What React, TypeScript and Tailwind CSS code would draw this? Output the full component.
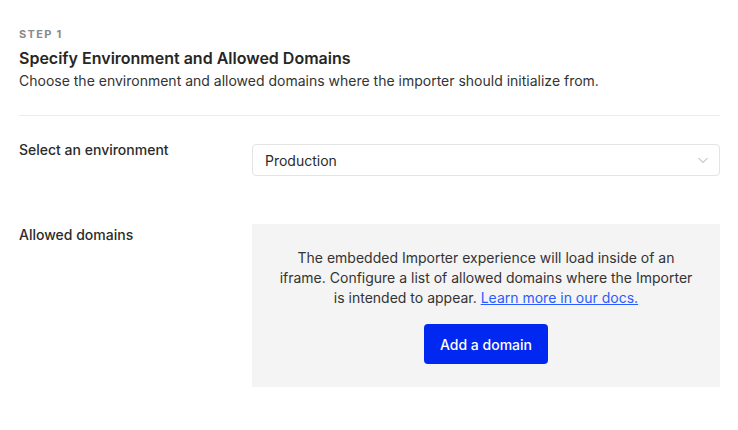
export default function App() {
  return (
    <main
      className="min-h-screen bg-white px-[19px] pt-[27px] text-[#2b2b2b]"
      style={{ fontFamily: "Inter, 'Noto Sans', sans-serif" }}
    >
      <div className="w-[701px]">
        <div className="text-[11px] font-bold leading-[14px] tracking-[0.12em] text-[#8a8a8a]">STEP 1</div>
        <h1 className="mt-[7px] text-[16px] font-semibold leading-[20px] text-[#262626]">
          Specify Environment and Allowed Domains
        </h1>
        <p className="mt-[3px] text-[14px] leading-[20px] text-[#333]">
          Choose the environment and allowed domains where the importer should initialize from.
        </p>

        <div className="mt-[24px] border-t border-[#ececec]" />

        <div className="mt-[27px] flex">
          <div className="w-[233px] text-[14px] font-medium leading-[14px] text-[#2b2b2b]">
            Select an environment
          </div>
          <button className="mt-[1px] flex h-[32px] flex-1 items-center justify-between rounded-[4px] border border-[#e4e4e4] bg-white pl-[12px] pr-[10px] text-left text-[14px] text-[#2b2b2b]">
            <span>Production</span>
            <svg width="12" height="12" viewBox="0 0 12 12" fill="none" stroke="#a8a8a8" strokeWidth="1">
              <path d="M1.5 4l4.5 4.5L10.5 4" />
            </svg>
          </button>
        </div>

        <div className="mt-[48px] flex">
          <div className="w-[233px] pt-[4px] text-[14px] font-medium leading-[14px] text-[#2b2b2b]">
            Allowed domains
          </div>
          <div className="flex h-[163px] flex-1 flex-col items-center bg-[#f4f4f4] px-[26px] pt-[24px]">
            <p className="text-center text-[14px] leading-[20px] text-[#333]">
              The embedded Importer experience will load inside of an iframe. Configure a list of allowed domains
              where the Importer is intended to appear.{" "}
              <a href="#" className="text-[#2a5cff] underline">
                Learn more in our docs.
              </a>
            </p>
            <button className="mt-[16px] h-[40px] w-[124px] rounded-[4px] bg-[#0028f0] text-[14px] font-medium text-white">
              Add a domain
            </button>
          </div>
        </div>
      </div>
    </main>
  );
}
